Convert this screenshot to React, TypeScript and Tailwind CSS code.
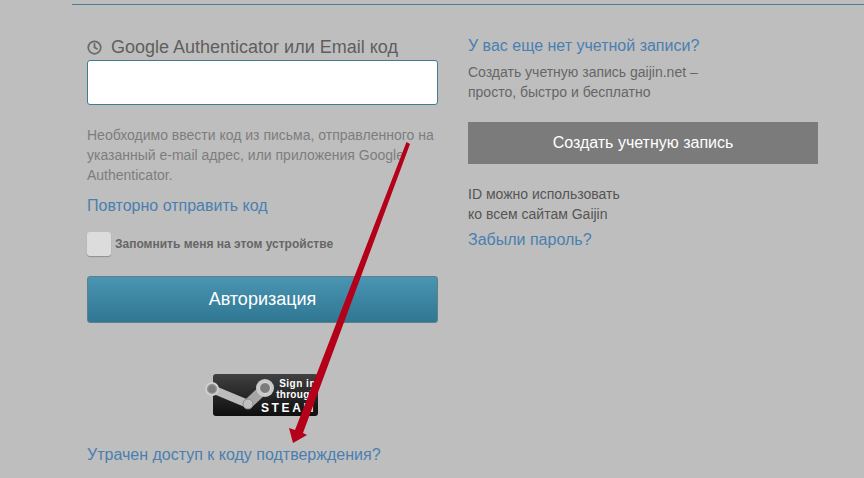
import { Clock } from 'lucide-react';

// Steam badge: pipe logo plus the three text lines
function SteamBadge() {
  return (
    <div className="relative h-[44px] w-[113px]">
      <div className="absolute bottom-0 right-0 flex h-[42px] w-[105px] flex-col items-end rounded-[3px] bg-gradient-to-b from-[#414141] to-[#0f0f0f] pr-[2px] pt-[4px] font-bold text-white">
        <span className="text-[10px] leading-[11px] tracking-[0.5px]">Sign in</span>
        <span className="text-[10px] leading-[11px] tracking-[0.3px]">through</span>
        <span className="mt-[2px] text-[12px] leading-[13px] tracking-[2.6px]">STEAM</span>
      </div>
      <svg className="absolute left-0 top-0" width="72" height="44" viewBox="0 0 72 44">
        <path d="M7 17 L43 32" stroke="#bcbcbc" strokeWidth="8" strokeLinecap="round" fill="none" />
        <path d="M43 32 L60 16" stroke="#a6a6a6" strokeWidth="10" strokeLinecap="round" fill="none" />
        <circle cx="7" cy="17" r="6" fill="#8f8f8f" stroke="#cfcfcf" strokeWidth="2" />
        <circle cx="7" cy="17" r="3.5" fill="#7d7d7d" />
        <circle cx="43" cy="32" r="5" fill="#c0c0c0" stroke="#8c8c8c" strokeWidth="1" />
        <circle cx="60" cy="16" r="9" fill="#c9c9c9" />
        <circle cx="60" cy="16" r="5.5" fill="#7c7c7c" stroke="#dddddd" strokeWidth="1" />
      </svg>
    </div>
  );
}

export default function App() {
  return (
    <div className="relative h-[478px] w-[864px] overflow-hidden bg-[#bebebe] font-['Liberation_Sans',Arial,sans-serif]">
      <div className="ml-[72px] mt-[4px] flex border-t border-[#4b7f92] pl-[15px] pt-[32px]">
        {/* Left column: login form */}
        <div className="w-[351px]">
          <div className="flex h-[23px] items-start">
            <Clock className="mt-[3px] h-[15px] w-[15px] text-[#6a6a6a]" strokeWidth={2.8} />
            <span className="ml-[9px] text-[18px] leading-[21px] text-[#5e5e5e]">Google Authenticator или Email код</span>
          </div>
          <div className="h-[45px] rounded-[3px] border border-[#3f7c92] bg-white" />
          <p className="mt-[20px] text-[14px] leading-[20px] text-[#7d7d7d]">
            Необходимо ввести код из письма, отправленного на указанный e-mail адрес, или приложения Google Authenticator.
          </p>
          <a className="mt-[10px] block text-[16px] leading-[22px] text-[#4a7fb0]">Повторно отправить код</a>
          <div className="mt-[15px] flex h-[24px] items-center">
            <div className="h-[24px] w-[24px] rounded-[3px] bg-[#dcdcdc] shadow-[0_1px_1px_#8f8f8f]" />
            <span className="ml-[4px] text-[12px] font-bold text-[#666666]">Запомнить меня на этом устройстве</span>
          </div>
          <button className="mt-[20px] h-[47px] w-full rounded-[3px] border border-[#5f7f8c] bg-gradient-to-b from-[#4a95b2] to-[#2f7793] text-[18px] text-white">
            Авторизация
          </button>
          <div className="ml-[118px] mt-[49px]">
            <SteamBadge />
          </div>
          <a className="mt-[29px] block text-[16px] leading-[20px] text-[#4a7fb0]">Утрачен доступ к коду подтверждения?</a>
        </div>
        {/* Right column: registration */}
        <div className="ml-[30px] w-[350px]">
          <a className="mt-[-1px] block text-[16px] leading-[20px] text-[#4a7fb0]">У вас еще нет учетной записи?</a>
          <p className="mt-[6px] text-[14px] leading-[20px] text-[#666666]">
            Создать учетную запись gaijin.net –<br />просто, быстро и бесплатно
          </p>
          <button className="mt-[20px] h-[42px] w-full bg-[#7b7b7b] text-[16px] text-white">Создать учетную запись</button>
          <p className="mt-[20px] text-[14px] leading-[20px] text-[#555555]">
            ID можно использовать<br />ко всем сайтам Gaijin
          </p>
          <a className="mt-[6px] block text-[16px] leading-[20px] text-[#4a7fb0]">Забыли пароль?</a>
        </div>
      </div>
      {/* Annotation arrow drawn over the page */}
      <svg className="absolute left-0 top-0" width="864" height="478" viewBox="0 0 864 478">
        <path d="M406.5 142 L410 144 L303 433 L307 435 L293 443 L289 428 L295 430 Z" fill="#b40018" />
      </svg>
    </div>
  );
}
